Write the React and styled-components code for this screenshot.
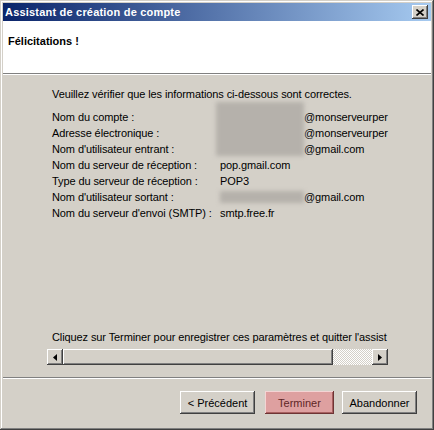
import React from 'react';
import styled, { createGlobalStyle } from 'styled-components';

const GlobalStyle = createGlobalStyle`
  html, body {
    margin: 0;
    padding: 0;
    background: #d4d0c8;
  }
  body {
    font-family: Tahoma, "Liberation Sans", Arial, sans-serif;
    font-size: 11px;
    color: #000;
  }
`;

const raised = `
  background: #d4d0c8;
  box-shadow: inset -1px -1px #404040, inset 1px 1px #ffffff,
    inset -2px -2px #808080, inset 2px 2px #d4d0c8;
`;

const Window = styled.div`
  box-sizing: border-box;
  width: 434px;
  height: 430px;
  padding: 3px;
  background: #d4d0c8;
  box-shadow: inset -1px -1px #404040, inset 1px 1px #d4d0c8,
    inset -2px -2px #808080, inset 2px 2px #ffffff;
  display: flex;
  flex-direction: column;
`;

const TitleBar = styled.div`
  height: 18px;
  display: flex;
  align-items: center;
  justify-content: space-between;
  padding: 0 3px 0 2px;
  background: linear-gradient(to right, #0a246a, #a6caf0);
`;

const Title = styled.span`
  color: #fff;
  font-weight: bold;
  font-size: 11px;
  letter-spacing: 0.2px;
  white-space: nowrap;
`;

const CloseButton = styled.div`
  ${raised}
  width: 16px;
  height: 14px;
  display: flex;
  align-items: center;
  justify-content: center;
`;

const Header = styled.div`
  height: 52px;
  background: #fff;
  padding: 13px 0 0 5px;
  box-sizing: border-box;
`;

const HeaderTitle = styled.div`
  font-weight: bold;
  line-height: 14px;
`;

const Divider = styled.div`
  height: 1px;
  background: #808080;
  border-bottom: 1px solid #fff;
  flex-shrink: 0;
`;

const Body = styled.div`
  height: 302px;
  box-sizing: border-box;
  padding: 11px 0 12px 44px;
  display: flex;
  flex-direction: column;
  letter-spacing: -0.1px;
`;

const Content = styled.div`
  width: 341px;
  flex: 1;
  display: flex;
  flex-direction: column;
`;

const Line = styled.div`
  line-height: 16px;
  padding-left: 5px;
  white-space: nowrap;
`;

const InfoGrid = styled.div`
  margin-top: 7px;
  padding-left: 5px;
  display: grid;
  grid-template-columns: 164px 88px 1fr;
  grid-auto-rows: 16px;
  line-height: 16px;
  white-space: nowrap;
`;

const Label = styled.div`
  grid-column: 1;
`;

const Value = styled.div`
  grid-column: ${(p) => (p.$wide ? '2 / 4' : '3')};
  padding-left: ${(p) => (p.$wide ? '4px' : '0')};
`;

const Masked = styled.div`
  grid-column: 2;
  grid-row: ${(p) => p.$rows};
  margin: ${(p) => p.$margin};
  background: #b5b1ab;
  filter: blur(2px);
`;

const Spacer = styled.div`
  flex: 1;
`;

const ScrollBar = styled.div`
  display: flex;
  height: 16px;
  margin-top: 4px;
`;

const ArrowButton = styled.div`
  ${raised}
  width: 16px;
  height: 16px;
  display: flex;
  align-items: center;
  justify-content: center;
`;

const Thumb = styled.div`
  ${raised}
  width: 270px;
`;

const Track = styled.div`
  flex: 1;
  background: repeating-conic-gradient(#ffffff 0 25%, #d4d0c8 0 50%) 0 0 / 2px 2px;
`;

const ButtonRow = styled.div`
  flex: 1;
  display: flex;
  justify-content: flex-end;
  align-items: flex-start;
  padding: 12px 14px 0 0;
`;

const Button = styled.button`
  ${raised}
  width: ${(p) => p.$width || 75}px;
  height: 23px;
  margin-left: ${(p) => p.$gap || 0}px;
  border: none;
  padding: 0;
  font: inherit;
  color: #000;
`;

const DefaultButton = styled(Button)`
  background: #dea0a0;
  color: #5e2626;
  box-shadow: inset -1px -1px #6e3434, inset 1px 1px #f4d4d4,
    inset -2px -2px #a86060, inset 2px 2px #dea0a0;
`;

const rows = [
  ['Nom du compte :', '@monserveurper'],
  ['Adresse électronique :', '@monserveurper'],
  ["Nom d'utilisateur entrant :", '@gmail.com'],
  ['Nom du serveur de réception :', 'pop.gmail.com', true],
  ['Type du serveur de réception :', 'POP3', true],
  ["Nom d'utilisateur sortant :", '@gmail.com'],
  ["Nom du serveur d'envoi (SMTP) :", 'smtp.free.fr', true],
];

const Arrow = ({ dir }) => (
  <svg width="4" height="7" viewBox="0 0 4 7">
    {dir === 'left' ? (
      <path d="M4 0 L0 3.5 L4 7 Z" fill="#000" />
    ) : (
      <path d="M0 0 L4 3.5 L0 7 Z" fill="#000" />
    )}
  </svg>
);

const App = () => {
  return (
    <>
      <GlobalStyle />
      <Window>
        <TitleBar>
          <Title>Assistant de création de compte</Title>
          <CloseButton>
            <svg width="8" height="7" viewBox="0 0 8 7">
              <path d="M0.5 0.5 L7.5 6.5 M7.5 0.5 L0.5 6.5" stroke="#000" strokeWidth="1.6" />
            </svg>
          </CloseButton>
        </TitleBar>
        <Header>
          <HeaderTitle>Félicitations !</HeaderTitle>
        </Header>
        <Divider />
        <Body>
          <Content>
            <Line>Veuillez vérifier que les informations ci-dessous sont correctes.</Line>
            <InfoGrid>
              <Masked $rows="1 / 4" $margin="-7px 0 1px 0" />
              <Masked $rows="6" $margin="2px 0 2px 4px" />
              {rows.map(([label, value, wide], i) => (
                <React.Fragment key={label}>
                  <Label style={{ gridRow: i + 1 }}>{label}</Label>
                  <Value $wide={wide} style={{ gridRow: i + 1 }}>
                    {value}
                  </Value>
                </React.Fragment>
              ))}
            </InfoGrid>
            <Spacer />
            <Line>Cliquez sur Terminer pour enregistrer ces paramètres et quitter l'assist</Line>
            <ScrollBar>
              <ArrowButton>
                <Arrow dir="left" />
              </ArrowButton>
              <Thumb />
              <Track />
              <ArrowButton>
                <Arrow dir="right" />
              </ArrowButton>
            </ScrollBar>
          </Content>
        </Body>
        <Divider />
        <ButtonRow>
          <Button>&lt; Précédent</Button>
          <DefaultButton $width={69} $gap={10}>
            Terminer
          </DefaultButton>
          <Button $gap={8}>Abandonner</Button>
        </ButtonRow>
      </Window>
    </>
  );
};

export default App;
